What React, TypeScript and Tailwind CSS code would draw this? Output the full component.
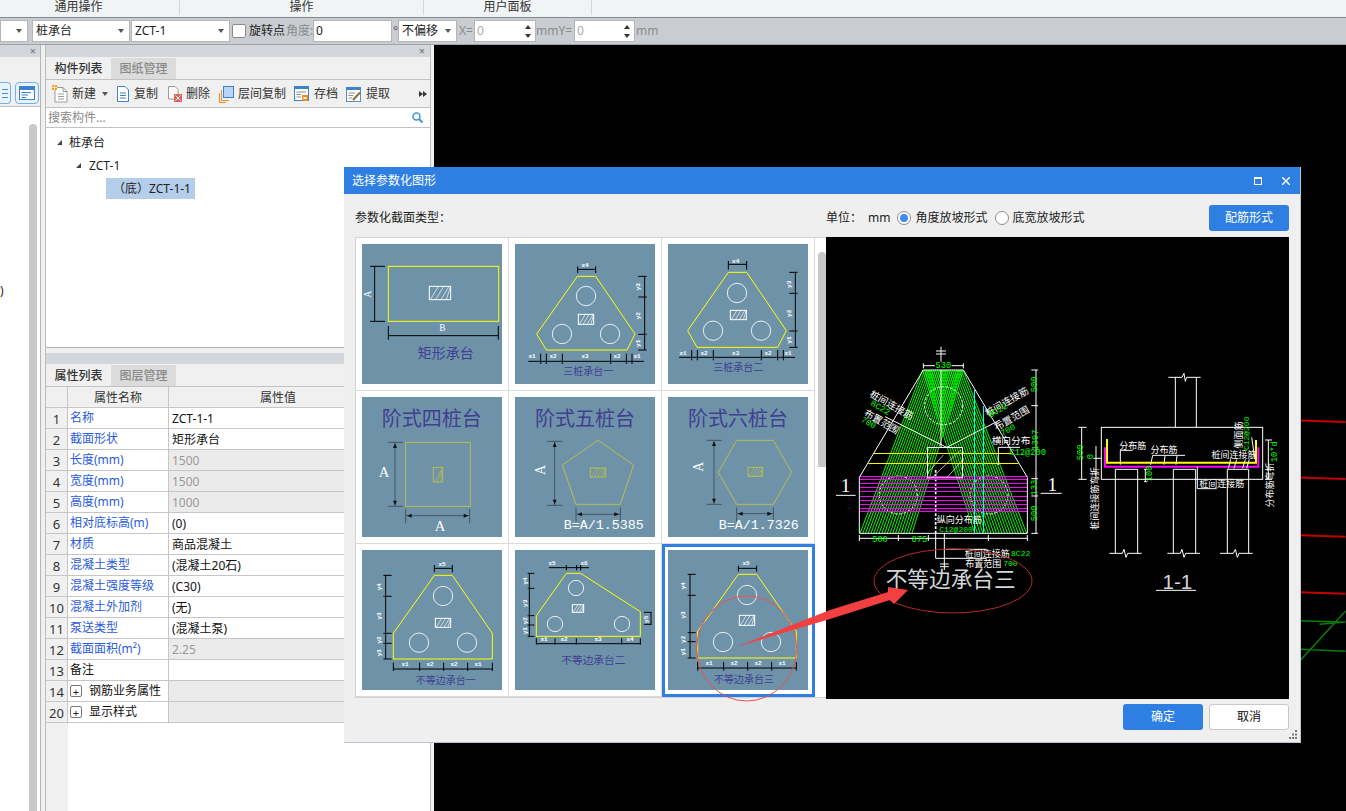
import React from "react";

const YEL = "#ffff00";
const OLV = "#b9bd4c";
const DIM = "#46545e";
const NAVY = "#413f90";
const G = "#00ff00";
const MONO = "'Liberation Mono', monospace";

type TP = { x: number; y: number; s?: number; c?: string; r?: number; f?: string; b?: boolean; o?: number; children: React.ReactNode };
function T({ x, y, s = 18, c = "#fff", r, f, b, o, children }: TP) {
  return (
    <text x={x} y={y} fontSize={s} fill={c} textAnchor="middle" dominantBaseline="central" fontFamily={f} fontWeight={b ? 700 : undefined} opacity={o} transform={r ? `rotate(${r} ${x} ${y})` : undefined}>
      {children}
    </text>
  );
}
function vdim(x: number, ys: number[], x0: number, x1: number) {
  return `M${x} ${ys[0]}V${ys[ys.length - 1]}` + ys.map((y) => `M${x0} ${y}H${x1}`).join("");
}
function hdim(y: number, xs: number[], y0: number, y1: number, from?: number, to?: number) {
  return `M${from ?? xs[0]} ${y}H${to ?? xs[xs.length - 1]}` + xs.map((x) => `M${x} ${y0}V${y1}`).join("");
}
function Hatch({ x, y, w, h, c = "#fff", sw = 3, n = 4 }: { x: number; y: number; w: number; h: number; c?: string; sw?: number; n?: number }) {
  const step = w / n;
  return (
    <g stroke={c} fill="none" strokeWidth={sw}>
      <rect x={x} y={y} width={w} height={h} />
      {Array.from({ length: n }).map((_, i) => {
        const a = x + step * i + 3;
        return <line key={i} x1={a} y1={y + h} x2={Math.min(a + h * 0.6, x + w)} y2={y} strokeWidth={2} />;
      })}
    </g>
  );
}
function Thumb({ vb, children }: { vb: string; children: React.ReactNode }) {
  return (
    <svg viewBox={vb} width={140} height={140} className="block bg-[#6e93a9]">
      {children}
    </svg>
  );
}
function Circles({ pts, r = 29 }: { pts: number[][]; r?: number }) {
  return (
    <g fill="none" stroke="#fff" strokeWidth={2.5}>
      {pts.map((p, i) => (
        <circle key={i} cx={p[0]} cy={p[1]} r={r} />
      ))}
    </g>
  );
}
const Blk = ({ d }: { d: string }) => <path d={d} fill="none" stroke="#000" strokeWidth={3} />;
const Dk = ({ d }: { d: string }) => <path d={d} fill="none" stroke={DIM} strokeWidth={3} />;
const Small = ({ x, y, r, children }: { x: number; y: number; r?: number; children: React.ReactNode }) => (
  <T x={x} y={y} s={18} f={MONO} b r={r}>
    {children}
  </T>
);

function Thumbs() {
  return [
    <Thumb vb="51 237 420 420" key="1">
      <rect x={130} y={304} width={331} height={165} fill="none" stroke={YEL} strokeWidth={3} />
      <Blk d={vdim(89, [304, 469], 75, 120)} />
      <T x={70} y={387} s={28} r={-90} f="'Liberation Serif', serif">A</T>
      <Hatch x={253} y={364} w={64} h={40} />
      <Blk d={hdim(512, [130, 460], 483, 524)} />
      <T x={292} y={490} s={28} f="'Liberation Serif', serif">B</T>
      <T x={302} y={562} s={42} c={NAVY}>矩形承台</T>
    </Thumb>,
    <Thumb vb="510 237 420 420" key="2">
      <polygon points="697,334 752,334 870,507 846,555 604,555 575,507" fill="none" stroke={YEL} strokeWidth={3} />
      <Circles pts={[[723, 393], [651, 507], [795, 507]]} />
      <Hatch x={700} y={448} w={46} h={30} />
      <Blk d={hdim(313, [698, 752], 304, 324)} />
      <Small x={720} y={300}>x4</Small>
      <Blk d={vdim(899, [334, 396, 508, 555], 880, 905)} />
      <Small x={880} y={365} r={-90}>y3</Small>
      <Small x={880} y={452} r={-90}>y2</Small>
      <Small x={880} y={535} r={-90}>y1</Small>
      <Blk d={hdim(589, [587, 604, 652, 797, 844, 861], 566, 597, 550, 897)} />
      <Small x={561} y={575}>x1</Small>
      <Small x={624} y={575}>x2</Small>
      <Small x={720} y={575}>x3</Small>
      <Small x={816} y={575}>x2</Small>
      <Small x={876} y={575}>x1</Small>
      <T x={730} y={619} s={30} c={NAVY}>三桩承台一</T>
    </Thumb>,
    <Thumb vb="969 237 420 420" key="3">
      <polygon points="1150,322 1205,322 1324,497 1298,547 1056,547 1028,497" fill="none" stroke={YEL} strokeWidth={3} />
      <Circles pts={[[1176, 384], [1104, 497], [1248, 497]]} />
      <Hatch x={1156} y={436} w={48} h={28} />
      <Blk d={hdim(298, [1150, 1205], 288, 314)} />
      <Small x={1172} y={290}>x4</Small>
      <Blk d={vdim(1351, [322, 385, 498, 547], 1333, 1358)} />
      <Small x={1333} y={358} r={-90}>y3</Small>
      <Small x={1333} y={445} r={-90}>y2</Small>
      <Small x={1333} y={525} r={-90}>y1</Small>
      <Blk d={hdim(577, [1040, 1057, 1105, 1249, 1298, 1315], 555, 586, 1002, 1350)} />
      <Small x={1014} y={566}>x1</Small>
      <Small x={1077} y={566}>x2</Small>
      <Small x={1172} y={566}>x3</Small>
      <Small x={1269} y={566}>x2</Small>
      <Small x={1329} y={566}>x1</Small>
      <T x={1180} y={607} s={30} c={NAVY}>三桩承台二</T>
    </Thumb>,
    <Thumb vb="51 21 420 420" key="4">
      <T x={260} y={85} s={60} c={NAVY}>阶式四桩台</T>
      <rect x={182} y={157} width={194} height={192} fill="none" stroke={OLV} strokeWidth={3} />
      <Hatch x={265} y={232} w={28} h={44} c={OLV} n={3} />
      <Dk d={vdim(150, [157, 349], 130, 173)} />
      <polygon points="150,160 144,174 156,174" fill="#111" />
      <polygon points="150,346 144,332 156,332" fill="#111" />
      <T x={117} y={245} s={44} f="'Liberation Serif', serif">A</T>
      <Dk d={hdim(377, [182, 374], 357, 400)} />
      <polygon points="186,377 200,371 200,383" fill="#111" />
      <polygon points="370,377 356,371 356,383" fill="#111" />
      <T x={285} y={407} s={44} f="'Liberation Serif', serif">A</T>
    </Thumb>,
    <Thumb vb="510 21 420 420" key="5">
      <T x={720} y={85} s={60} c={NAVY}>阶式五桩台</T>
      <polygon points="759,151 866,225 826,343 693,343 652,225" fill="none" stroke={OLV} strokeWidth={3} />
      <Hatch x={736} y={234} w={46} h={27} c={OLV} n={5} />
      <Dk d={vdim(629, [154, 346], 607, 652)} />
      <polygon points="629,157 623,171 635,171" fill="#111" />
      <polygon points="629,343 623,329 635,329" fill="#111" />
      <T x={585} y={240} s={42} r={-90} f="'Liberation Serif', serif">A</T>
      <Dk d={hdim(373, [693, 826], 352, 395)} />
      <polygon points="697,373 711,367 711,379" fill="#111" />
      <polygon points="822,373 808,367 808,379" fill="#111" />
      <T x={776} y={405} s={40} f={MONO}>B=A/1.5385</T>
    </Thumb>,
    <Thumb vb="969 21 420 420" key="6">
      <T x={1179} y={85} s={60} c={NAVY}>阶式六桩台</T>
      <polygon points="1175,151 1285,151 1340,247 1285,343 1175,343 1120,247" fill="none" stroke={OLV} strokeWidth={3} />
      <Hatch x={1209} y={232} w={44} h={27} c={OLV} n={5} />
      <Dk d={vdim(1107, [151, 343], 1085, 1130)} />
      <polygon points="1107,154 1101,168 1113,168" fill="#111" />
      <polygon points="1107,340 1101,326 1113,326" fill="#111" />
      <T x={1062} y={230} s={42} r={-90} f="'Liberation Serif', serif">A</T>
      <Dk d={hdim(371, [1175, 1285], 352, 395)} />
      <polygon points="1179,371 1193,365 1193,377" fill="#111" />
      <polygon points="1281,371 1267,365 1267,377" fill="#111" />
      <T x={1241} y={405} s={40} f={MONO}>B=A/1.7326</T>
    </Thumb>,
    <Thumb vb="51 480 420 420" key="7">
      <polygon points="268,556 322,556 442,730 442,807 145,807 145,730" fill="none" stroke={YEL} strokeWidth={3} />
      <Circles pts={[[294, 618], [222, 758], [366, 758]]} />
      <Hatch x={271} y={685} w={46} h={27} />
      <Blk d={hdim(535, [268, 322], 525, 547)} />
      <Small x={291} y={523}>x5</Small>
      <Blk d={vdim(122, [556, 619, 730, 760, 807], 115, 140)} />
      <Small x={103} y={590} r={-90}>y4</Small>
      <Small x={103} y={678} r={-90}>y3</Small>
      <Small x={103} y={750} r={-90}>y2</Small>
      <Small x={103} y={788} r={-90}>y1</Small>
      <Blk d={hdim(837, [145, 224, 296, 368, 442], 818, 843)} />
      <Small x={180} y={824}>x1</Small>
      <Small x={255} y={824}>x2</Small>
      <Small x={327} y={824}>x2</Small>
      <Small x={399} y={824}>x1</Small>
      <T x={302} y={869} s={30} c={NAVY}>不等边承台一</T>
    </Thumb>,
    <Thumb vb="510 480 420 420" key="8">
      <polygon points="664,550 707,550 886,665 886,739 574,739 574,677" fill="none" stroke={YEL} strokeWidth={3} />
      <Circles pts={[[693, 594], [630, 702], [831, 702]]} r={23} />
      <Hatch x={682} y={644} w={34} h={23} />
      <Blk d={hdim(533, [664, 695, 707], 525, 541, 612, 732)} />
      <Small x={621} y={520}>x5</Small>
      <Small x={717} y={520}>x6</Small>
      <Blk d={vdim(553, [550, 595, 677, 705, 739], 548, 568)} />
      <Small x={541} y={573} r={-90}>y4</Small>
      <Small x={541} y={640} r={-90}>y3</Small>
      <Small x={541} y={692} r={-90}>y2</Small>
      <Small x={541} y={722} r={-90}>y1</Small>
      <Blk d={vdim(918, [667, 703], 897, 920)} />
      <Small x={905} y={688} r={-90}>y5</Small>
      <Blk d={hdim(761, [574, 630, 694, 830, 886], 745, 764)} />
      <Small x={597} y={748}>x1</Small>
      <Small x={657} y={748}>x2</Small>
      <Small x={759} y={748}>x3</Small>
      <Small x={855} y={748}>x4</Small>
      <T x={745} y={811} s={32} c={NAVY}>不等边承台二</T>
    </Thumb>,
    <Thumb vb="969 480 420 420" key="9">
      <polygon points="1180,553 1235,553 1354,724 1354,804 1058,804 1058,724" fill="none" stroke={YEL} strokeWidth={3} />
      <Circles pts={[[1206, 615], [1134, 756], [1278, 756]]} />
      <Hatch x={1183} y={676} w={46} h={30} />
      <Blk d={hdim(535, [1180, 1235], 527, 545)} />
      <Small x={1203} y={521}>x5</Small>
      <Blk d={vdim(1035, [553, 616, 728, 755, 804], 1028, 1052)} />
      <Small x={1015} y={587} r={-90}>y4</Small>
      <Small x={1015} y={675} r={-90}>y3</Small>
      <Small x={1015} y={748} r={-90}>y2</Small>
      <Small x={1015} y={785} r={-90}>y1</Small>
      <Blk d={hdim(834, [1058, 1136, 1208, 1280, 1354], 816, 842)} />
      <Small x={1092} y={821}>x1</Small>
      <Small x={1167} y={821}>x2</Small>
      <Small x={1239} y={821}>x2</Small>
      <Small x={1311} y={821}>x1</Small>
      <T x={1197} y={866} s={30} c={NAVY}>不等边承台三</T>
    </Thumb>,
  ];
}

function CadPreview() {
  const lefts = Array.from({ length: 20 }).map((_, i) => [278 + i * 6.4, 90 + i * 8.2]);
  const rights = Array.from({ length: 20 }).map((_, i) => [278 + i * 6.4, 434 + i * 8.2]);
  const mags = [409.5, 418.5, 430.5, 442.5, 454.5, 469.5, 481.5, 493.5, 505.5, 514.5];
  const W = "#fff";
  return (
    <svg viewBox="826 237 463 462" className="block w-full h-full bg-black">
      <g transform="translate(830 340) scale(0.33333)" strokeWidth={3} fill="none">
        <g stroke={G} strokeWidth={3}>
          {lefts.map((p, i) => (
            <line key={i} x1={p[0]} y1={90} x2={p[1]} y2={580} />
          ))}
          {rights.map((p, i) => (
            <line key={i} x1={p[0]} y1={90} x2={p[1]} y2={580} />
          ))}
        </g>
        <g stroke={W} strokeDasharray="8 5">
          <circle cx={341} cy={197} r={57} />
          <circle cx={205} cy={465} r={57} />
          <circle cx={477} cy={465} r={57} />
          <path d="M317 390V580" strokeWidth={5} />
        </g>
        <g stroke="#ff00ff">
          {mags.map((y) => (
            <path key={y} d={`M88 ${y}H592`} />
          ))}
        </g>
        <path d="M132 340.5H545M115 370.5H565" stroke={YEL} />
        <path d="M433.5 150V578M460.5 198V578" stroke="#00ffff" />
        <polygon points="280,90 400,90 592,412 592,580 88,580 88,412" stroke={W} />
        <rect x={292.5} y={322.5} width={105} height={91} stroke={W} />
        <path d="M292 400L340 345M305 414L392 330M350 414L398 360" stroke={W} strokeWidth={2} />
        <path d="M165 230L350 322L510 240M333 90V322" stroke={W} />
        <path d="M333 20V65M318 33H348M318 42H348" stroke={W} />
        <path d="M280 70V85M400 70V85M280 77H315M365 77H400" stroke={W} />
        <path d="M317 580V655H470M343 580V690M330 672H356M330 680H356M343 628H470" stroke={W} />
        <path d={hdim(595, [88, 205, 295, 475, 592], 585, 603)} stroke={W} />
        <path d="M618 90V580M604 90H624M604 197H624M604 416H624M604 468H624M604 580H624" stroke={W} />
        <path d="M18 466H77M632 460H695M505 375V322H570" stroke={W} />
        <T x={47} y={438} s={58} f="'Liberation Serif', serif">1</T>
        <T x={667} y={434} s={58} f="'Liberation Serif', serif">1</T>
        <g stroke="none">
          <T x={340} y={77} s={26} c={G} f={MONO}>530</T>
          <T x={150} y={600} s={26} c={G} f={MONO}>500</T>
          <T x={268} y={600} s={26} c={G} f={MONO}>875</T>
          <T x={615} y={133} s={26} c={G} r={-90} f={MONO}>500</T>
          <T x={618} y={300} s={26} c={G} r={-90} f={MONO}>1397</T>
          <T x={615} y={443} s={26} c={G} r={-90} f={MONO}>133</T>
          <T x={615} y={520} s={26} c={G} r={-90} f={MONO}>500</T>
          <T x={185} y={195} s={29} r={30}>桩间连接筋</T>
          <T x={150} y={205} s={26} c={G} r={30} f={MONO}>8C22</T>
          <T x={155} y={245} s={29} r={30}>布置范围</T>
          <T x={115} y={250} s={26} c={G} r={30} f={MONO}>700</T>
          <T x={530} y={185} s={29} r={-30}>桩间连接筋</T>
          <T x={505} y={213} s={26} c={G} r={-30} f={MONO}>8C22</T>
          <T x={545} y={235} s={29} r={-30}>布置范围</T>
          <T x={535} y={272} s={26} c={G} r={-30} f={MONO}>700</T>
          <T x={543} y={303} s={29}>横向分布</T>
          <T x={593} y={340} s={26} c={G} f={MONO}>C12@200</T>
          <T x={388} y={539} s={27}>纵向分布筋</T>
          <T x={378} y={569} s={24} c={G} f={MONO}>C12@200</T>
          <T x={472} y={642} s={27}>桩间连接筋</T>
          <T x={572} y={642} s={24} c={G} f={MONO}>8C22</T>
          <T x={460} y={672} s={27}>布置范围</T>
          <T x={541} y={672} s={24} c={G} f={MONO}>700</T>
          <T x={362} y={716} s={65} c="#d2d6da">不等边承台三</T>
        </g>
      </g>
      <g transform="translate(1060 360) scale(0.33333)" strokeWidth={3} fill="none">
        <path d="M346 52V202M409 52V202M325 52H366L372 40L376 64L380 52H422" stroke={W} />
        <rect x={124} y={202} width={484} height={156} stroke={W} />
        <path d="M135 262V320H595V262" stroke="#ff00ff" strokeWidth={6} />
        <path d="M141 237V308H588V240" stroke={YEL} strokeWidth={6} />
        <path d="M166 580V328H233V580M340 580V328H407V580M502 580V328H566V580" stroke={W} />
        <path d="M148 580H187L192 568L198 592L203 580H245M322 580H361L366 568L372 592L377 580H420M480 580H520L526 568L532 592L537 580H578" stroke={W} />
        <path d="M65 202V358M55 202H80M55 358H80M108 258V358M100 295H124M252 328H262M252 365H262M256 328V365" stroke={W} />
        <path d="M625 240V358M615 240H636M615 358H636" stroke={W} />
        <path d="M181 314V271H218M272 314L278 286H375M312 314L315 288M348 314L351 288" stroke={W} />
        <path d="M412 320V386H470M505 325L512 298M522 325L530 298M548 325L556 298M560 325L568 298M575 232L585 298" stroke={W} />
        <path d="M288 691H408" stroke={W} />
        <g stroke="none">
          <T x={218} y={256} s={27}>分布筋</T>
          <T x={312} y={270} s={27}>分布筋</T>
          <T x={522} y={285} s={27}>桩间连接筋</T>
          <T x={485} y={372} s={27}>桩间连接筋</T>
          <T x={105} y={415} s={27} r={-90}>桩间连接筋弯折</T>
          <T x={630} y={375} s={27} r={-90}>分布筋弯折</T>
          <T x={535} y={225} s={27} r={-90}>侧面筋</T>
          <T x={560} y={220} s={24} c={G} r={-90} f={MONO}>C12@200</T>
          <T x={63} y={277} s={26} c={G} r={-90} f={MONO}>500</T>
          <T x={93} y={290} s={26} c={G} r={-90} f={MONO}>0</T>
          <T x={270} y={340} s={26} c={G} r={-90} f={MONO}>100</T>
          <T x={645} y={275} s={26} c={G} r={-90} f={MONO}>10*d</T>
          <T x={352} y={664} s={62} c="#d2d6da" f="'Liberation Sans', sans-serif">1-1</T>
        </g>
      </g>
    </svg>
  );
}

function Caret() {
  return <span className="block w-0 h-0 border-x-[3px] border-x-transparent border-t-[4px] border-t-[#555]" />;
}
function Dropdown({ w, label }: { w: string; label?: string }) {
  return (
    <div className={`${w} h-[22px] bg-white border border-[#b5b5b5] flex items-center justify-between pl-[3px] pr-[5px] text-[12px] text-[#222] shrink-0`}>
      <span>{label}</span>
      <Caret />
    </div>
  );
}
function Spin({ w }: { w: string }) {
  return (
    <div className={`${w} h-[22px] bg-white border border-[#b5b5b5] flex items-center justify-between pl-[2px] pr-[4px] text-[12px] text-[#aaa] shrink-0`}>
      <span>0</span>
      <span className="flex flex-col gap-[5px]">
        <span className="w-0 h-0 border-x-[3px] border-x-transparent border-b-[4px] border-b-[#333]" />
        <span className="w-0 h-0 border-x-[3px] border-x-transparent border-t-[4px] border-t-[#333]" />
      </span>
    </div>
  );
}
function CloseMark() {
  return <span className="text-[11px] leading-[12px] font-bold text-[#8a8a8a]">×</span>;
}

function NewIcon() {
  return (
    <svg width="16" height="18" viewBox="0 0 16 18">
      <path d="M3 2.5H11L15 6.5V17H3Z" fill="#fff" stroke="#9a9a9a" />
      <path d="M11 2.5V6.5H15M6 9H12M6 11.5H12M6 14H12" fill="none" stroke="#9a9a9a" />
      <rect x="0" y="0" width="5" height="5" fill="#f59a23" />
      <path d="M0 2.5H5M2.5 0V5" stroke="#ffe9b8" />
    </svg>
  );
}
function CopyIcon() {
  return (
    <svg width="12" height="16" viewBox="0 0 12 16">
      <path d="M.5.5H8L11.5 4V15.5H.5Z" fill="#fff" stroke="#3c82cf" />
      <path d="M3 7H9M3 9.5H9M3 12H9" stroke="#3c82cf" />
    </svg>
  );
}
function DelIcon() {
  return (
    <svg width="14" height="16" viewBox="0 0 14 16">
      <path d="M.5.5H7L10 3.5V13H.5Z" fill="#fff" stroke="#9a9a9a" />
      <rect x="6" y="8" width="8" height="8" fill="#e0605a" />
      <path d="M7.5 9.5L12.5 14.5M12.5 9.5L7.5 14.5" stroke="#fff" />
    </svg>
  );
}
function LayerIcon() {
  return (
    <svg width="15" height="17" viewBox="0 0 15 17">
      <rect x="4.5" y=".5" width="10" height="11" fill="#b8d5f7" stroke="#3c82cf" />
      <path d="M2.5 4V14.5H10M.5 7V16.5H7" fill="none" stroke="#f08a24" />
    </svg>
  );
}
function SaveIcon() {
  return (
    <svg width="15" height="16" viewBox="0 0 15 16">
      <rect x=".5" y=".5" width="14" height="14" fill="#fff" stroke="#3c82cf" />
      <rect x="0" y="0" width="15" height="3" fill="#3c82cf" />
      <path d="M2.5 6H12M2.5 8.5H7M2.5 11H7" stroke="#8a8a8a" />
      <rect x="8" y="9" width="6" height="6" fill="#f08a24" />
      <rect x="9.5" y="11" width="3" height="2" fill="#fff" />
    </svg>
  );
}
function PickIcon() {
  return (
    <svg width="15" height="16" viewBox="0 0 15 16">
      <rect x=".5" y="1.5" width="14" height="14" fill="#fff" stroke="#5b8fc7" />
      <rect x="0" y="1" width="15" height="3" fill="#3c82cf" />
      <path d="M2.5 7H9M2.5 9.5H7M2.5 12H6" stroke="#8a8a8a" />
      <path d="M7 14L14 6.5" stroke="#8a6a3a" strokeWidth="2" />
    </svg>
  );
}
function ToolBtn({ icon, label, ml, gap }: { icon: React.ReactNode; label: string; ml: string; gap: string }) {
  return (
    <div className={`flex items-center ${ml} ${gap} shrink-0`}>
      {icon}
      <span className="text-[12px] text-[#333]">{label}</span>
    </div>
  );
}

type Row = { n: number; k: string; v?: string; ro?: boolean; black?: boolean; plus?: boolean };
const rows: Row[] = [
  { n: 1, k: "名称", v: "ZCT-1-1" },
  { n: 2, k: "截面形状", v: "矩形承台" },
  { n: 3, k: "长度(mm)", v: "1500", ro: true },
  { n: 4, k: "宽度(mm)", v: "1500", ro: true },
  { n: 5, k: "高度(mm)", v: "1000", ro: true },
  { n: 6, k: "相对底标高(m)", v: "(0)" },
  { n: 7, k: "材质", v: "商品混凝土" },
  { n: 8, k: "混凝土类型", v: "(混凝土20石)" },
  { n: 9, k: "混凝土强度等级", v: "(C30)" },
  { n: 10, k: "混凝土外加剂", v: "(无)" },
  { n: 11, k: "泵送类型", v: "(混凝土泵)" },
  { n: 12, k: "截面面积(m²)", v: "2.25", ro: true },
  { n: 13, k: "备注", black: true },
  { n: 14, k: "钢筋业务属性", black: true, plus: true, ro: true },
  { n: 20, k: "显示样式", black: true, plus: true, ro: true },
];

function PropTable() {
  return (
    <div className="flex-1 bg-white relative text-[12px]">
      <div className="absolute left-0 top-0 bottom-0 w-[22px] bg-[#f0f0f0]" />
      <div className="relative flex h-[21px] bg-[#f0f0f0] border-b border-[#c6c6c6] text-[#333]">
        <div className="w-[22px] border-r border-[#c6c6c6]" />
        <div className="w-[101px] border-r border-[#c6c6c6] text-center leading-[22px]">属性名称</div>
        <div className="flex-1 text-center leading-[22px] pr-[43px]">属性值</div>
      </div>
      {rows.map((r) => (
        <div key={r.n} className="relative flex h-[21px] border-b border-[#c6c6c6] leading-[22px]">
          <div className="w-[22px] border-r border-[#c6c6c6] text-center text-[#333] text-[13px]">{r.n}</div>
          <div className={`w-[101px] border-r border-[#c6c6c6] bg-white pl-[2px] flex items-center ${r.black ? "text-[#111]" : "text-[#2a5bdc]"}`}>
            {r.plus && (
              <span className="w-[12px] h-[12px] border border-[#777] rounded-[2px] flex items-center justify-center text-[11px] leading-none mr-[7px] text-[#222]">+</span>
            )}
            {r.k}
          </div>
          <div className={`flex-1 pl-[3px] ${r.ro ? "bg-[#ebebeb] text-[#999]" : "bg-white text-[#111]"}`}>{r.v}</div>
        </div>
      ))}
    </div>
  );
}

function Radio({ on, label }: { on?: boolean; label: string }) {
  return (
    <div className="flex items-center gap-[4px]">
      <span className="w-[14px] h-[14px] rounded-full border border-[#8e8e8e] bg-white flex items-center justify-center">
        {on && <span className="w-[8px] h-[8px] rounded-full bg-[#3d8bf2]" />}
      </span>
      <span>{label}</span>
    </div>
  );
}

function Dialog() {
  const items = Thumbs();
  return (
    <div className="absolute left-[344px] top-[167px] w-[957px] h-[576px] bg-[#efefef] border-r border-b border-[#bcc4d0] flex flex-col text-[12px] text-[#222]">
      <div className="h-[27px] bg-[#2e7fe1] flex items-center justify-between pl-[8px] pr-[10px] text-white shrink-0">
        <span>选择参数化图形</span>
        <div className="flex items-center gap-[20px]">
          <span className="w-[8px] h-[8px] border border-white border-t-2" />
          <svg width="8" height="8" viewBox="0 0 8 8">
            <path d="M0 0L8 8M8 0L0 8" stroke="#fff" strokeWidth="1.4" />
          </svg>
        </div>
      </div>
      <div className="h-[43px] flex items-center pl-[11px] pr-[11px] pt-[5px] shrink-0">
        <span>参数化截面类型：</span>
        <div className="ml-[375px] flex items-center">
          <span>单位：</span>
          <span className="ml-[6px] mr-[7px]">mm</span>
          <Radio on label="角度放坡形式" />
          <div className="w-[7px]" />
          <Radio label="底宽放坡形式" />
        </div>
        <button className="ml-auto w-[80px] h-[26px] bg-[#2e7fe1] text-white rounded-[3px] text-[12px]">配筋形式</button>
      </div>
      <div className="flex h-[462px] pl-[11px] pr-[11px] shrink-0">
        <div className="w-[471px] h-[461px] border border-[#d2d2d2] border-r-0 bg-white flex">
          <div className="grid grid-cols-[153px_153px_153px] grid-rows-[153px_153px_153px] w-[459px]">
            {items.map((it, i) => (
              <div key={i} className={`p-[6px] border-r border-b border-[#dadada] box-border ${i === 8 ? "outline-[3px] outline-solid outline-[#2e7fe1] -outline-offset-[3px]" : ""}`}>
                {it}
              </div>
            ))}
          </div>
          <div className="flex-1 pl-[3px] pt-[14px]">
            <div className="w-[8px] h-[215px] bg-[#c8c8c8] rounded-t-[4px]" />
          </div>
        </div>
        <div className="flex-1 bg-black">
          <CadPreview />
        </div>
      </div>
      <div className="flex-1 flex items-start justify-end gap-[6px] pr-[11px] pt-[5px] relative">
        <button className="w-[80px] h-[26px] bg-[#2e7fe1] text-white rounded-[3px] text-[12px]">确定</button>
        <button className="w-[80px] h-[26px] bg-white border border-[#c8c8c8] rounded-[3px] text-[12px] text-[#111]">取消</button>
        <svg width="10" height="10" viewBox="0 0 10 10" className="absolute right-[2px] bottom-[2px]">
          <path d="M7 0h2v2H7zM4 3.5h2v2H4zM7 3.5h2v2H7zM1 7h2v2H1zM4 7h2v2H4zM7 7h2v2H7z" fill="#777" />
        </svg>
      </div>
    </div>
  );
}

export default function App() {
  return (
    <div className="relative w-[1346px] h-[811px] overflow-hidden flex flex-col bg-[#f0f0f0] [font-family:'Noto_Sans','Noto_Sans_CJK_SC',sans-serif] text-[#222]">
      {/* ribbon group labels */}
      <div className="h-[18px] shrink-0 bg-[#f1f4f5] border-b border-[#85888c] flex text-[12px] leading-[14px] text-[#333]">
        <div className="w-[180px] text-center border-r border-[#d4d7da] pr-[22px] h-[15px]">通用操作</div>
        <div className="w-[244px] text-center border-r border-[#d4d7da] h-[15px]">操作</div>
        <div className="w-[168px] text-center border-r border-[#d4d7da] h-[15px]">用户面板</div>
      </div>
      {/* property toolbar */}
      <div className="h-[27px] shrink-0 bg-[#c9ccd1] border-b border-[#a0a3a7] flex items-center text-[12px]">
        <Dropdown w="w-[28px]" />
        <div className="w-[4px] shrink-0" />
        <Dropdown w="w-[98px]" label="桩承台" />
        <div className="w-[1px] shrink-0" />
        <Dropdown w="w-[99px]" label="ZCT-1" />
        <span className="w-[14px] h-[14px] ml-[2px] bg-white border border-[#8a8a8a] rounded-[2px] shrink-0" />
        <span className="ml-[3px] w-[37px] shrink-0 text-[#222] whitespace-nowrap">旋转点</span>
        <span className="w-[27px] shrink-0 text-[#8b8b8b] whitespace-nowrap">角度:</span>
        <div className="w-[79px] h-[22px] bg-white border border-[#b5b5b5] pl-[2px] leading-[20px] text-[#222] shrink-0">0</div>
        <span className="w-[5px] ml-[1px] text-[#666] shrink-0 leading-none">°</span>
        <Dropdown w="w-[59px]" label="不偏移" />
        <span className="w-[17px] pl-[2px] text-[#8b8b8b] shrink-0">X=</span>
        <Spin w="w-[62px]" />
        <span className="w-[38px] text-[#8b8b8b] shrink-0">mmY=</span>
        <Spin w="w-[61px]" />
        <span className="ml-[1px] text-[#8b8b8b] shrink-0">mm</span>
      </div>
      {/* workspace */}
      <div className="flex-1 flex min-h-0">
        {/* left navigation panel (mostly cut off) */}
        <div className="w-[41px] border-r border-[#b5b5b5] flex flex-col shrink-0 bg-white">
          <div className="h-[12px] bg-[#d3d6da] flex items-center justify-end pr-[4px]"><CloseMark /></div>
          <div className="h-[50px] bg-[#f0f0f0] border-b border-[#c2c2c2] flex items-start gap-[4px] pt-[25px] overflow-hidden">
            <div className="w-[11px] h-[22px] border border-[#6fb2f2] border-l-0 rounded-r-[4px] bg-[#eaf3fd] flex flex-col justify-center items-end gap-[3px] pr-[2px] shrink-0">
              <span className="w-[6px] h-[1px] bg-[#4a90e2]" />
              <span className="w-[6px] h-[1px] bg-[#4a90e2]" />
              <span className="w-[6px] h-[1px] bg-[#4a90e2]" />
            </div>
            <div className="w-[24px] h-[22px] border border-[#6fb2f2] rounded-[4px] bg-[#eaf3fd] flex items-center justify-center shrink-0">
              <svg width="16" height="14" viewBox="0 0 16 14">
                <rect x=".5" y=".5" width="15" height="13" fill="#fff" stroke="#3c82cf" />
                <rect x="0" y="0" width="16" height="4" fill="#3c82cf" />
                <path d="M2.5 6.5H12M2.5 9H9M2.5 11.5H7" stroke="#3c82cf" />
              </svg>
            </div>
          </div>
          <div className="flex-1 relative pt-[176px] text-[12px] leading-[16px] text-[#222]">
            <span className="block">)</span>
            <div className="absolute left-[29px] top-[17px] bottom-0 w-[8px] bg-[#c9c9c9] rounded-t-[4px]" />
          </div>
        </div>
        <div className="w-[4px] shrink-0" />
        {/* component list and property list */}
        <div className="w-[386px] flex flex-col shrink-0 border-l border-r border-[#bdbdbd]">
          <div className="h-[303px] flex flex-col border-b border-[#b5b5b5] shrink-0 bg-white">
            <div className="h-[12px] bg-[#d3d6da] flex items-center justify-end pr-[5px] shrink-0"><CloseMark /></div>
            <div className="h-[23px] bg-[#f0f0f0] border-b border-[#c2c2c2] flex text-[12px] shrink-0 pt-[1px]">
              <div className="w-[65px] text-center leading-[21px] font-medium text-[#333]">构件列表</div>
              <div className="w-[65px] text-center leading-[21px] bg-[#dcdcdc] text-[#8a8a8a] font-medium">图纸管理</div>
            </div>
            <div className="h-[28px] bg-[#f0f0f0] border-b border-[#c2c2c2] flex items-center relative shrink-0 pt-[1px]">
              <ToolBtn icon={<NewIcon />} label="新建" ml="ml-[6px]" gap="gap-[4px]" />
              <span className="ml-[6px] flex shrink-0"><Caret /></span>
              <ToolBtn icon={<CopyIcon />} label="复制" ml="ml-[9px]" gap="gap-[5px]" />
              <ToolBtn icon={<DelIcon />} label="删除" ml="ml-[10px]" gap="gap-[4px]" />
              <ToolBtn icon={<LayerIcon />} label="层间复制" ml="ml-[9px]" gap="gap-[4px]" />
              <ToolBtn icon={<SaveIcon />} label="存档" ml="ml-[8px]" gap="gap-[5px]" />
              <ToolBtn icon={<PickIcon />} label="提取" ml="ml-[8px]" gap="gap-[5px]" />
              <div className="ml-auto mr-[3px] flex">
                <span className="w-0 h-0 border-y-[3px] border-y-transparent border-l-[4px] border-l-[#333]" />
                <span className="w-0 h-0 border-y-[3px] border-y-transparent border-l-[4px] border-l-[#333]" />
              </div>
            </div>
            <div className="h-[20px] border-b border-[#c2c2c2] flex items-center justify-between pl-[2px] pr-[7px] text-[12px] text-[#8a8a8a] shrink-0">
              <span>搜索构件...</span>
              <svg width="11" height="11" viewBox="0 0 11 11">
                <circle cx="4.5" cy="4.5" r="3.5" fill="none" stroke="#3f9ad6" strokeWidth="1.6" />
                <path d="M7 7L10.5 10.5" stroke="#3f9ad6" strokeWidth="2" />
              </svg>
            </div>
            <div className="flex-1 text-[12px] text-[#222] pt-[3px]">
              <div className="h-[23px] flex items-center pl-[11px]">
                <span className="w-0 h-0 border-l-[5px] border-l-transparent border-b-[5px] border-b-[#444] mr-[7px]" />
                桩承台
              </div>
              <div className="h-[23px] flex items-center pl-[30px]">
                <span className="w-0 h-0 border-l-[5px] border-l-transparent border-b-[5px] border-b-[#444] mr-[8px]" />
                ZCT-1
              </div>
              <div className="ml-[60px] w-[89px] h-[21px] bg-[#b3cdea] flex items-center pl-[7px] mt-[1px]">（底）ZCT-1-1</div>
            </div>
          </div>
          <div className="h-[5px] shrink-0 bg-[#f0f0f0]" />
          <div className="h-[11px] shrink-0 bg-[#d3d6da]" />
          <div className="h-[23px] bg-[#f0f0f0] border-b border-[#c2c2c2] flex text-[12px] shrink-0 pt-[1px]">
            <div className="w-[65px] text-center leading-[21px] font-medium text-[#333]">属性列表</div>
            <div className="w-[65px] text-center leading-[21px] bg-[#dcdcdc] text-[#8a8a8a] font-medium">图层管理</div>
          </div>
          <PropTable />
        </div>
        <div className="w-[3px] shrink-0" />
        {/* drawing canvas */}
        <div className="flex-1 bg-black min-w-0">
          <svg viewBox="434 44 912 767" className="block w-full h-full">
            <g stroke="#c40000" strokeWidth="2" fill="none">
              <path d="M1301 420L1346 421.5M1301 477L1346 478.5M1301 535L1346 536.5M1301 592L1346 593.5" />
            </g>
            <g stroke="#0b7d0b" strokeWidth="1.5" fill="none">
              <path d="M1301 620.5L1346 622M1320 624L1346 621.7M1301 649L1346 651M1301 660L1346 611" />
            </g>
          </svg>
        </div>
      </div>
      <Dialog />
      {/* hand-drawn annotation over the dialog */}
      <svg viewBox="0 0 1346 811" className="absolute inset-0 w-[1346px] h-[811px] pointer-events-none">
        <ellipse cx="746.7" cy="648.5" rx="50" ry="52.5" fill="none" stroke="#f0504a" strokeWidth="1" />
        <ellipse cx="953" cy="581" rx="79" ry="32" fill="none" stroke="#b52a2a" strokeWidth="1" />
        <polygon points="736,647 830,610 888,592 888,587 908,590 894,604 890,600 830,619" fill="#f24040" />
      </svg>
    </div>
  );
}
